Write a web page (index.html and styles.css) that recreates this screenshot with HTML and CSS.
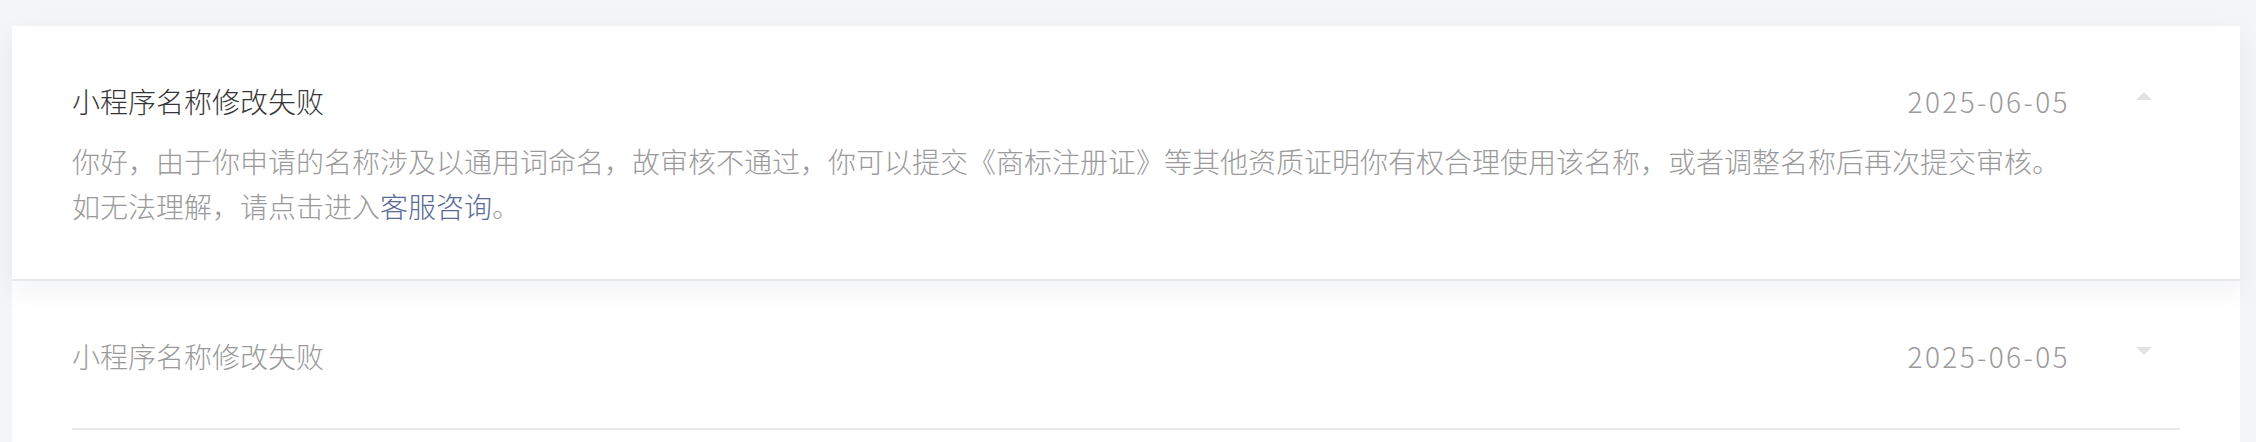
FILE: index.html
```html
<!DOCTYPE html>
<html lang="zh-CN">
<head>
<meta charset="utf-8">
<title>消息列表</title>
<link rel="stylesheet" href="styles.css">
</head>
<body>
  <div class="list">
    <div class="item expanded">
      <div class="item-inner">
        <div class="head">
          <div class="title">小程序名称修改失败</div>
          <div class="date">2025-06-05</div>
          <span class="arrow up"></span>
        </div>
        <div class="desc">你好，由于你申请的名称涉及以通用词命名，故审核不通过，你可以提交《商标注册证》等其他资质证明你有权合理使用该名称，或者调整名称后再次提交审核。<br>如无法理解，请点击进入<a class="link" href="#">客服咨询</a>。</div>
      </div>
    </div>
    <div class="item">
      <div class="item-inner">
        <div class="head">
          <div class="title">小程序名称修改失败</div>
          <div class="date">2025-06-05</div>
          <span class="arrow down"></span>
        </div>
      </div>
    </div>
  </div>
</body>
</html>
```

FILE: styles.css
```css
html, body {
  margin: 0;
  padding: 0;
}
body {
  background: #f4f5f7;
  font-family: "Noto Sans CJK SC", "Noto Sans", sans-serif;
  height: 442px;
  overflow: hidden;
}
.list {
  margin: 26px 16px 0 12px;
  background: #ffffff;
  min-height: 416px;
}
.item {
  background: #ffffff;
}
.item.expanded {
  position: relative;
  z-index: 1;
  border-bottom: 2px solid #e7e8ec;
  box-shadow: 0 10px 28px rgba(20, 30, 60, 0.06);
}
.item.expanded .item-inner {
  padding: 55px 60px 50px;
}
.item .item-inner {
  margin: 0 60px;
  padding: 55px 0 52px;
  border-bottom: 2px solid #e6e7eb;
}
.item.expanded .item-inner {
  margin: 0;
  border-bottom: 0;
}
.head {
  display: flex;
  align-items: center;
  height: 40px;
}
.title {
  flex: 1;
  font-size: 28px;
  font-weight: 300;
  line-height: 40px;
  color: #9a9a9a;
}
.expanded .title {
  color: #353535;
}
.date {
  font-size: 28px;
  font-weight: 300;
  line-height: 40px;
  color: #9a9a9a;
  letter-spacing: 2.4px;
}
.arrow {
  width: 0;
  height: 0;
  border-left: 8px solid transparent;
  border-right: 8px solid transparent;
  margin: 0 28px 10px 66px;
}
.arrow.up {
  border-bottom: 8px solid #e1e2e8;
}
.arrow.down {
  border-top: 8px solid #e1e2e8;
}
.desc {
  margin-top: 18px;
  font-size: 28px;
  font-weight: 300;
  line-height: 45px;
  color: #9a9a9a;
}
.link {
  color: #576b95;
  text-decoration: none;
}
```
